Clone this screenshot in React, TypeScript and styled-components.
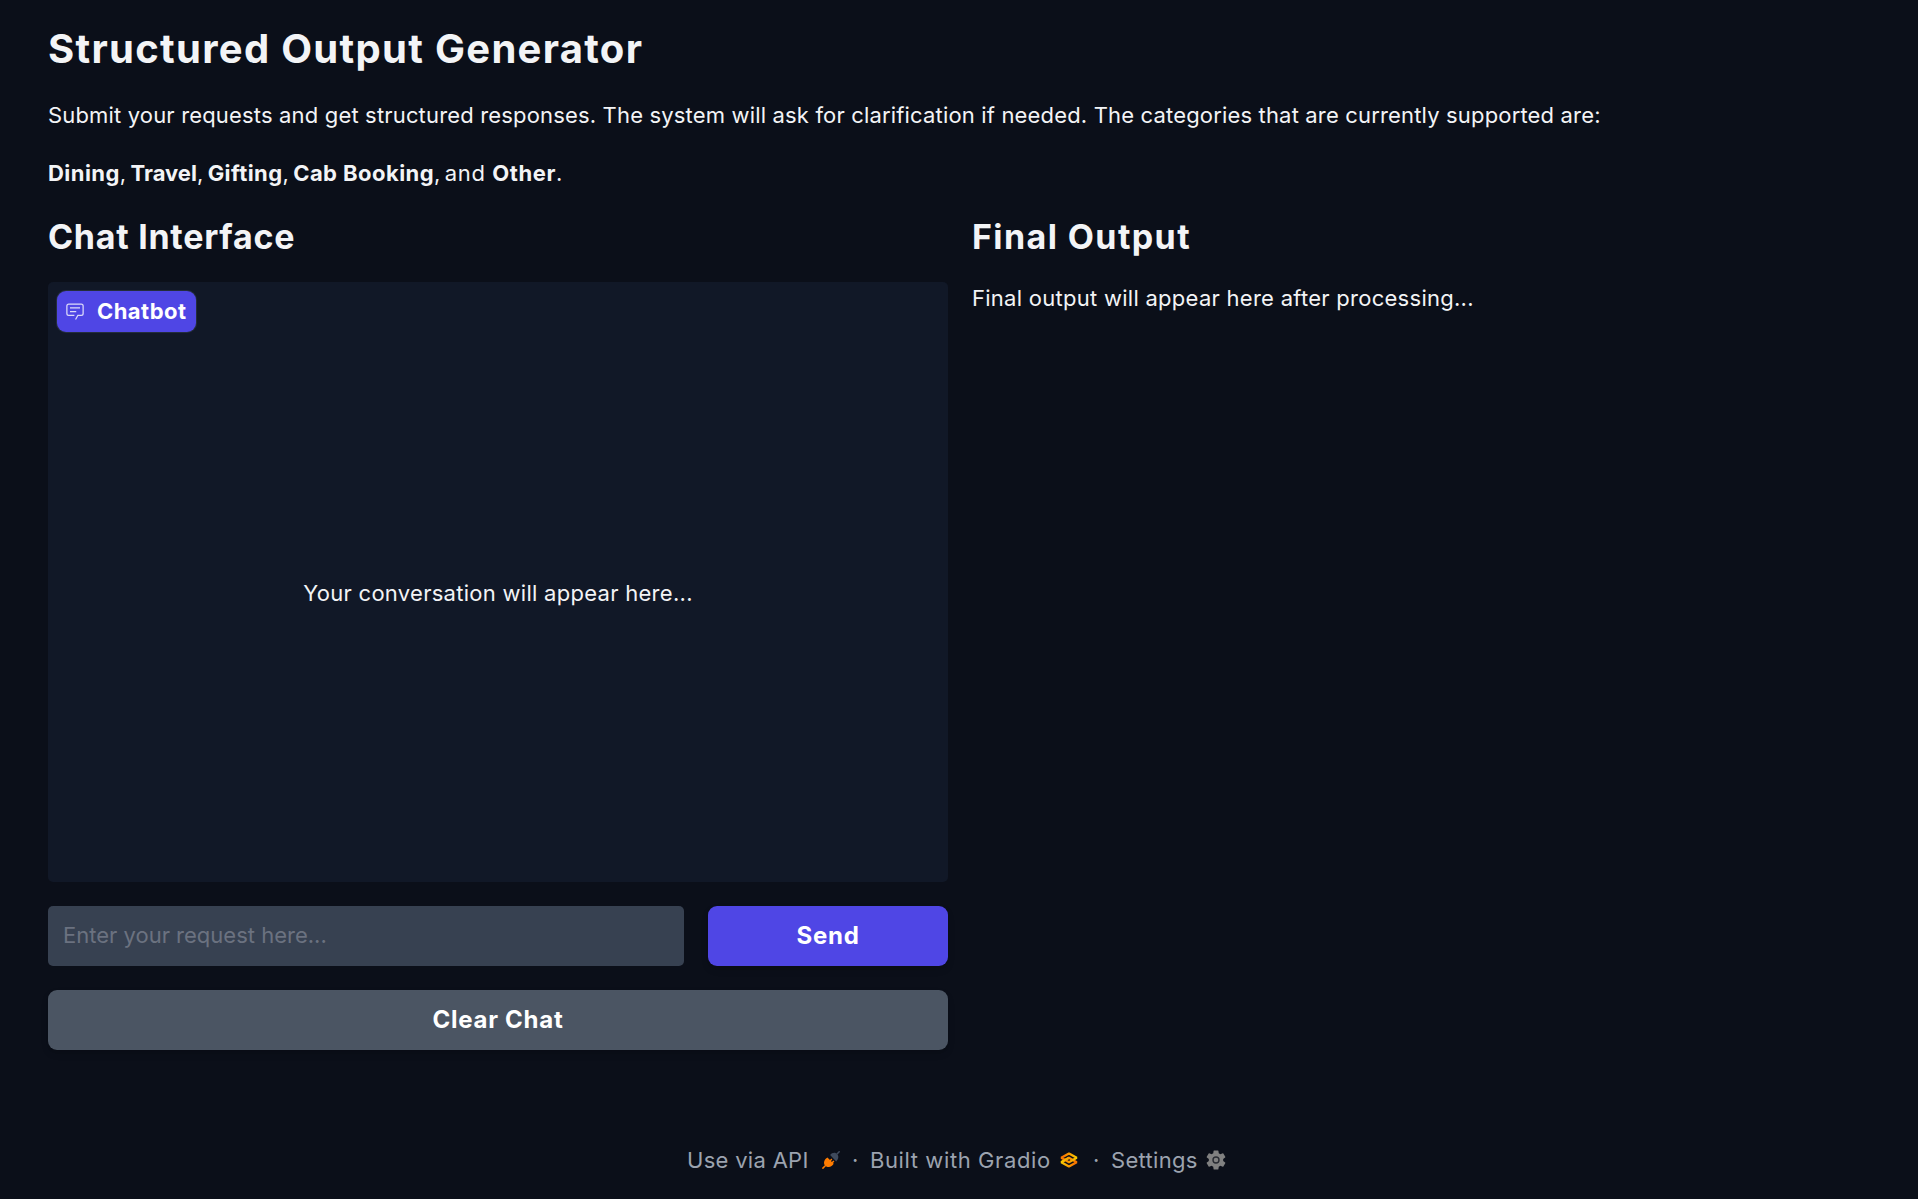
import React from 'react';
import styled, { createGlobalStyle } from 'styled-components';

const GlobalStyle = createGlobalStyle`
  *, *::before, *::after { box-sizing: border-box; }
  body {
    margin: 0;
    background: #0b0f19;
    color: #f3f4f6;
    font-family: Inter, "Noto Sans", sans-serif;
    font-kerning: normal;
  }
`;

const Page = styled.div`
  display: flex;
  flex-direction: column;
  height: 1199px;
  padding: 25px 46px 0 48px;
`;

const Title = styled.h1`
  margin: 0;
  font-size: 40px;
  line-height: 48px;
  font-weight: 700;
  letter-spacing: 1.3px;
`;

const Text = styled.p<{ $top?: number; $spacing?: number }>`
  margin: ${(p) => p.$top ?? 0}px 0 0;
  font-size: 22px;
  line-height: 32px;
  letter-spacing: ${(p) => p.$spacing ?? 0}px;
  white-space: nowrap;
`;

const Tracked = styled.span<{ $spacing: number }>`
  letter-spacing: ${(p) => p.$spacing}px;
`;

const Strong = styled(Tracked).attrs({ as: 'strong' })`
  font-weight: 700;
`;

const Columns = styled.main`
  display: grid;
  grid-template-columns: 900px 900px;
  gap: 24px;
  margin-top: 28px;
`;

const Column = styled.section`
  display: flex;
  flex-direction: column;
`;

const Heading = styled.h2<{ $spacing: number }>`
  margin: 0 0 25px;
  font-size: 34px;
  line-height: 40px;
  font-weight: 700;
  letter-spacing: ${(p) => p.$spacing}px;
`;

const ChatPanel = styled.div`
  display: flex;
  flex-direction: column;
  align-items: flex-start;
  height: 600px;
  padding: 9px;
  border-radius: 5px;
  background: #111827;
`;

const ChatLabel = styled.div`
  display: flex;
  align-items: center;
  gap: 12px;
  width: 139px;
  height: 41px;
  padding: 0 0 1px 8px;
  border-radius: 9px;
  background: #4f46e5;
  box-shadow: 0 0 0 1px #37415180;
  color: #fff;
  font-size: 22px;
  font-weight: 700;
  letter-spacing: 0.45px;
  svg { opacity: 0.8; }
`;

const EmptyState = styled.div`
  align-self: stretch;
  flex: 1;
  display: flex;
  align-items: center;
  justify-content: center;
  padding-bottom: 20px;
  font-size: 22px;
  letter-spacing: 0.28px;
`;

const Composer = styled.div`
  display: flex;
  gap: 24px;
  margin: 24px 0;
`;

const RequestInput = styled.input`
  flex: 1;
  min-width: 0;
  height: 60px;
  padding: 0 15px 2px;
  border: 0;
  border-radius: 5px;
  outline: 0;
  background: #374151;
  color: #f3f4f6;
  font: 400 22px Inter, "Noto Sans", sans-serif;
  &::placeholder { color: #6b7280; opacity: 1; }
`;

const Button = styled.button<{ $primary?: boolean }>`
  width: ${(p) => (p.$primary ? '240px' : '100%')};
  height: 60px;
  padding: 0 0 2px;
  border: 0;
  border-radius: 9px;
  background: ${(p) => (p.$primary ? '#4f46e5' : '#4b5563')};
  box-shadow: 0 4px 8px -1px rgba(0, 0, 0, 0.12), 0 2px 4px -2px rgba(0, 0, 0, 0.12);
  color: #fff;
  font: 700 24px Inter, "Noto Sans", sans-serif;
  letter-spacing: 0.75px;
`;

const Footer = styled.footer`
  display: flex;
  align-items: center;
  margin: 94px 0 0 639px;
  height: 32px;
  color: #9ca3af;
  font-size: 22px;
  white-space: nowrap;
`;

const FooterItem = styled.span<{ $width: number; $gap: number; $spacing: number }>`
  display: flex;
  align-items: center;
  width: ${(p) => p.$width}px;
  gap: ${(p) => p.$gap}px;
  letter-spacing: ${(p) => p.$spacing}px;
  svg { flex: none; }
`;

const Dot = styled.span`
  width: 18px;
`;

const ChatIcon = () => (
  <svg width="20" height="20" viewBox="0 0 32 32" fill="currentColor">
    <path d="M17.74 30L16 29l4-7h6a2 2 0 0 0 2-2V8a2 2 0 0 0-2-2H6a2 2 0 0 0-2 2v12a2 2 0 0 0 2 2h9v2H6a4 4 0 0 1-4-4V8a4 4 0 0 1 4-4h20a4 4 0 0 1 4 4v12a4 4 0 0 1-4 4h-4.84Z" />
    <path d="M8 10h16v2H8zm0 6h10v2H8z" />
  </svg>
);

const PlugIcon = () => (
  <svg width="18" height="18" viewBox="0 0 18 18" fill="none">
    <path d="M8.1 4C9.7 2 12 1.4 14 2.2L15.9 4C16.8 6.2 16.3 8.4 14.2 10.4Z" fill="#3f4a5c" />
    <path d="m15 3 2.2-2.3" stroke="#3f4a5c" strokeWidth="1.5" strokeLinecap="round" />
    <path d="m5.4 6.4 2.6 2.7 1.3-1.6 1 1L9 10.1l.8.8 1.6-1.5 1 1-1.4 1.6.7.8c-1.4 2.9-4.8 4-7.4 2.6L2.6 14C1.3 11.4 2.4 8 5.4 6.4Z" fill="#ff7c00" />
    <path d="m.9 17.1 2.4-2.4" stroke="#ff7c00" strokeWidth="1.5" strokeLinecap="round" />
  </svg>
);

const GradioIcon = () => (
  <svg width="22" height="22" viewBox="0 0 576 576" fill="none" strokeWidth="59" strokeLinejoin="bevel">
    <path d="M287.5 229L86 344.5L287.5 460L489 344.5L287.5 229Z" stroke="url(#lower)" />
    <path d="M287.5 116L86 231.5L287.5 347L489 231.5L287.5 116Z" stroke="url(#upper)" />
    <path d="M86 344L288 229" stroke="url(#bridge)" />
    <defs>
      <linearGradient id="lower" x1="60" y1="341" x2="429.5" y2="344" gradientUnits="userSpaceOnUse">
        <stop stopColor="#F9D100" /><stop offset="1" stopColor="#F97700" />
      </linearGradient>
      <linearGradient id="upper" x1="513.5" y1="231" x2="143.5" y2="231" gradientUnits="userSpaceOnUse">
        <stop stopColor="#F9D100" /><stop offset="1" stopColor="#F97700" />
      </linearGradient>
      <linearGradient id="bridge" x1="60" y1="344" x2="428.5" y2="342" gradientUnits="userSpaceOnUse">
        <stop stopColor="#F9D100" /><stop offset="1" stopColor="#F97700" />
      </linearGradient>
    </defs>
  </svg>
);

const GearIcon = () => (
  <svg width="24" height="24" viewBox="0 0 24 24">
    <path
      fill="#808080"
      d="M19.14 12.94c.04-.3.06-.61.06-.94s-.02-.64-.07-.94l2.03-1.58a.49.49 0 0 0 .12-.61l-1.92-3.32a.49.49 0 0 0-.59-.22l-2.39.96a7 7 0 0 0-1.62-.94l-.36-2.54a.48.48 0 0 0-.48-.41h-3.84a.47.47 0 0 0-.47.41l-.36 2.54c-.59.24-1.13.57-1.62.94l-2.39-.96a.48.48 0 0 0-.59.22L2.73 8.87a.47.47 0 0 0 .12.61l2.03 1.58c-.05.3-.08.63-.08.94s.02.64.07.94l-2.03 1.58a.49.49 0 0 0-.12.61l1.92 3.32c.12.22.37.29.59.22l2.39-.96c.5.38 1.03.7 1.62.94l.36 2.54c.05.24.24.41.48.41h3.84c.24 0 .44-.17.47-.41l.36-2.54c.59-.24 1.13-.56 1.62-.94l2.39.96c.22.08.47 0 .59-.22l1.92-3.32a.47.47 0 0 0-.12-.61z"
    />
    <circle cx="12" cy="12" r="3" fill="#808080" stroke="#282b32" strokeWidth="1.4" />
  </svg>
);

export default function App() {
  return (
    <>
      <GlobalStyle />
      <Page>
        <Title>Structured Output Generator</Title>
        <Text $top={26} $spacing={0.165}>
          Submit your requests and get structured responses. The system will ask for clarification if needed. The
          categories that are currently supported are:
        </Text>
        <Text $top={26} $spacing={-0.9}>
          <Strong $spacing={0.45}>Dining</Strong>, <Strong $spacing={0}>Travel</Strong>,{' '}
          <Strong $spacing={0.4}>Gifting</Strong>, <Strong $spacing={0.45}>Cab Booking</Strong>,{' '}
          <Tracked $spacing={0.6}>and </Tracked>
          <Strong $spacing={0.6}>Other</Strong>.
        </Text>
        <Columns>
          <Column>
            <Heading $spacing={0.72}>Chat Interface</Heading>
            <ChatPanel>
              <ChatLabel>
                <ChatIcon />
                Chatbot
              </ChatLabel>
              <EmptyState>Your conversation will appear here...</EmptyState>
            </ChatPanel>
            <Composer>
              <RequestInput placeholder="Enter your request here..." />
              <Button $primary>Send</Button>
            </Composer>
            <Button>Clear Chat</Button>
          </Column>
          <Column>
            <Heading $spacing={1.4}>Final Output</Heading>
            <Text $spacing={0.27}>Final output will appear here after processing...</Text>
          </Column>
        </Columns>
        <Footer>
          <FooterItem $width={165} $gap={13} $spacing={0.3}>
            Use via API
            <PlugIcon />
          </FooterItem>
          <Dot>·</Dot>
          <FooterItem $width={223} $gap={7} $spacing={0.6}>
            Built with Gradio
            <GradioIcon />
          </FooterItem>
          <Dot>·</Dot>
          <FooterItem $width={120} $gap={6} $spacing={0.3}>
            Settings
            <GearIcon />
          </FooterItem>
        </Footer>
      </Page>
    </>
  );
}
